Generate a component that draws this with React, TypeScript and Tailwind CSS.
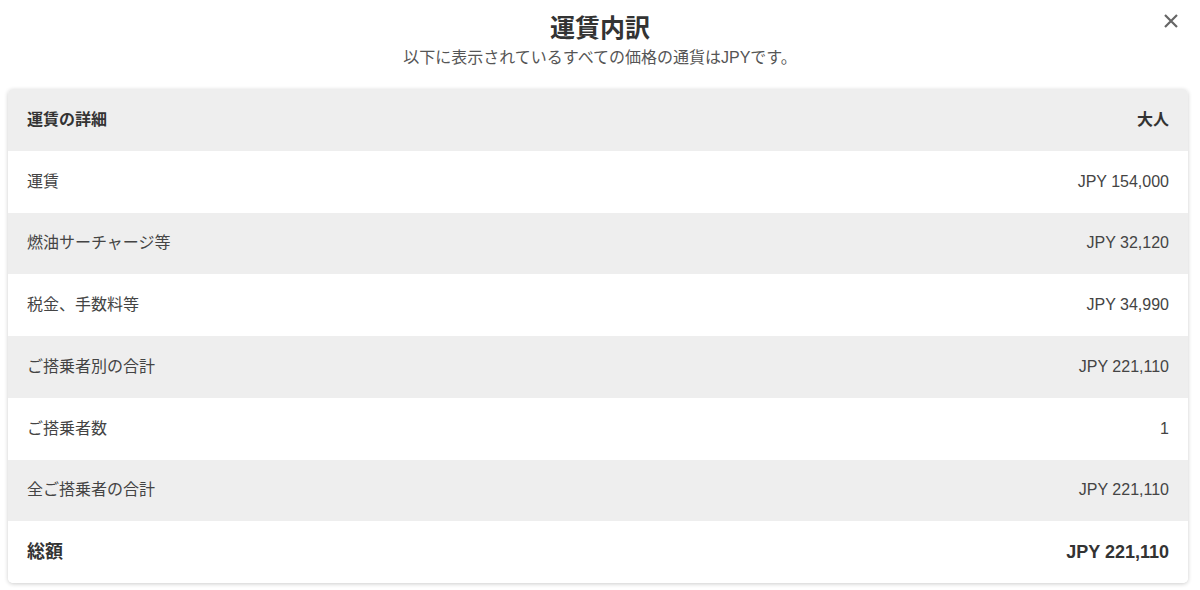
import React from "react";

interface FareRow {
    label: string;
    value: string;
}

const rows: FareRow[] = [
    { label: "運賃", value: "JPY 154,000" },
    { label: "燃油サーチャージ等", value: "JPY 32,120" },
    { label: "税金、手数料等", value: "JPY 34,990" },
    { label: "ご搭乗者別の合計", value: "JPY 221,110" },
    { label: "ご搭乗者数", value: "1" },
    { label: "全ご搭乗者の合計", value: "JPY 221,110" },
];

const font = "font-['Liberation_Sans','Noto_Sans_CJK_JP',sans-serif]";

export default function App() {
    return (
        <div className={`w-[1200px] h-[590px] bg-white overflow-hidden ${font}`}>
            <div className="relative flex flex-col items-center pt-[13px]">
                <h1 className="text-[25px] leading-[30px] font-bold text-[#333]">運賃内訳</h1>
                <p className="mt-[5px] text-[16px] leading-[20px] text-[#555]">
                    以下に表示されているすべての価格の通貨はJPYです。
                </p>
                <button className="absolute right-[22px] top-[14px] text-[#666]">
                    <svg width="14" height="14" viewBox="0 0 14 14">
                        <path d="M1 1L13 13M13 1L1 13" stroke="currentColor" strokeWidth="2.2" />
                    </svg>
                </button>
            </div>

            <div className="ml-2 mr-3 mt-[21px] rounded-[5px] overflow-hidden shadow-[0_1px_4px_rgba(0,0,0,0.2)]">
                <div className="h-[61.75px] flex items-center justify-between px-[19px] bg-[#eeeeee] text-[16px] font-bold text-[#333]">
                    <span>運賃の詳細</span>
                    <span>大人</span>
                </div>
                {rows.map((row, i) => (
                    <div
                        key={row.label}
                        className={`h-[61.75px] flex items-center justify-between px-[19px] text-[16px] text-[#444] ${
                            i % 2 === 0 ? "bg-white" : "bg-[#eeeeee]"
                        }`}
                    >
                        <span>{row.label}</span>
                        <span>{row.value}</span>
                    </div>
                ))}
                <div className="h-[61.75px] flex items-center justify-between px-[19px] bg-white text-[18px] font-bold text-[#333]">
                    <span>総額</span>
                    <span>JPY 221,110</span>
                </div>
            </div>
        </div>
    );
}
